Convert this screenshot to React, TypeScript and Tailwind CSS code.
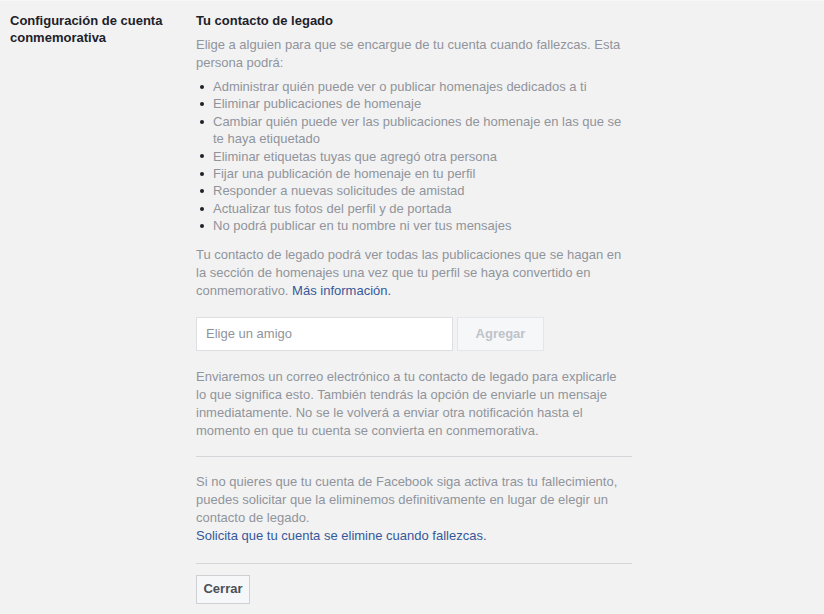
const BULLETS: string[] = [
  "Administrar quién puede ver o publicar homenajes dedicados a ti",
  "Eliminar publicaciones de homenaje",
  "Cambiar quién puede ver las publicaciones de homenaje en las que se te haya etiquetado",
  "Eliminar etiquetas tuyas que agregó otra persona",
  "Fijar una publicación de homenaje en tu perfil",
  "Responder a nuevas solicitudes de amistad",
  "Actualizar tus fotos del perfil y de portada",
  "No podrá publicar en tu nombre ni ver tus mensajes",
];

export default function App() {
  return (
    <div className="min-h-[614px] w-full bg-[#f2f2f2] border-t border-[#f7f7f7] font-['Liberation_Sans',Arial,sans-serif] text-[13px]">
      <div className="flex pt-[11px]">
        <div className="w-[196px] shrink-0 pl-[10px] pr-4">
          <h2 className="text-[13px] font-bold leading-[17px] text-[#1d2129]">
            Configuración de cuenta conmemorativa
          </h2>
        </div>

        <div className="w-[436px] shrink-0">
          <h3 className="text-[13px] font-bold leading-[17px] text-[#1d2129]">Tu contacto de legado</h3>

          <p className="mt-[7px] leading-[18px] text-[#90949c]">
            Elige a alguien para que se encargue de tu cuenta cuando fallezcas. Esta persona podrá:
          </p>

          <ul className="mt-[6px] leading-[17.4px] text-[#90949c]">
            {BULLETS.map((item) => (
              <li key={item} className="flex">
                <span className="flex h-[17.4px] w-[17px] shrink-0 items-center pl-[4px]">
                  <span className="h-[4px] w-[4px] rounded-full bg-[#1d2129]" />
                </span>
                <span>{item}</span>
              </li>
            ))}
          </ul>

          <p className="mt-[11px] leading-[18px] text-[#90949c]">
            Tu contacto de legado podrá ver todas las publicaciones que se hagan en la sección de homenajes una vez
            que tu perfil se haya convertido en conmemorativo.{" "}
            <a href="#" className="text-[#365899]">
              Más información.
            </a>
          </p>

          <div className="mt-[17px] flex gap-[4px]">
            <input
              type="text"
              placeholder="Elige un amigo"
              className="h-[34px] w-[257px] border border-[#dddfe2] bg-white px-[9px] text-[13px] text-[#1d2129] outline-none placeholder:text-[#90949c]"
            />
            <button
              disabled
              className="h-[34px] w-[87px] border border-[#e5e6e9] bg-[#f6f7f9] text-[13px] font-bold text-[#bec3c9]"
            >
              Agregar
            </button>
          </div>

          <p className="mt-[17px] w-[428px] leading-[18px] text-[#90949c]">
            Enviaremos un correo electrónico a tu contacto de legado para explicarle lo que significa esto. También
            tendrás la opción de enviarle un mensaje inmediatamente. No se le volverá a enviar otra notificación hasta
            el momento en que tu cuenta se convierta en conmemorativa.
          </p>

          <div className="mt-[16px] h-px bg-[#d4d6da]" />

          <p className="mt-[16px] leading-[18px] text-[#90949c]">
            Si no quieres que tu cuenta de Facebook siga activa tras tu fallecimiento, puedes solicitar que la
            eliminemos definitivamente en lugar de elegir un contacto de legado.
            <br />
            <a href="#" className="text-[#365899]">
              Solicita que tu cuenta se elimine cuando fallezcas.
            </a>
          </p>

          <div className="mt-[18px] h-px bg-[#d4d6da]" />

          <button className="mt-[11px] h-[29px] w-[54px] border border-[#ced0d4] bg-[#f6f7f9] text-[13px] font-bold text-[#4b4f56]">
            Cerrar
          </button>
        </div>
      </div>
    </div>
  );
}
